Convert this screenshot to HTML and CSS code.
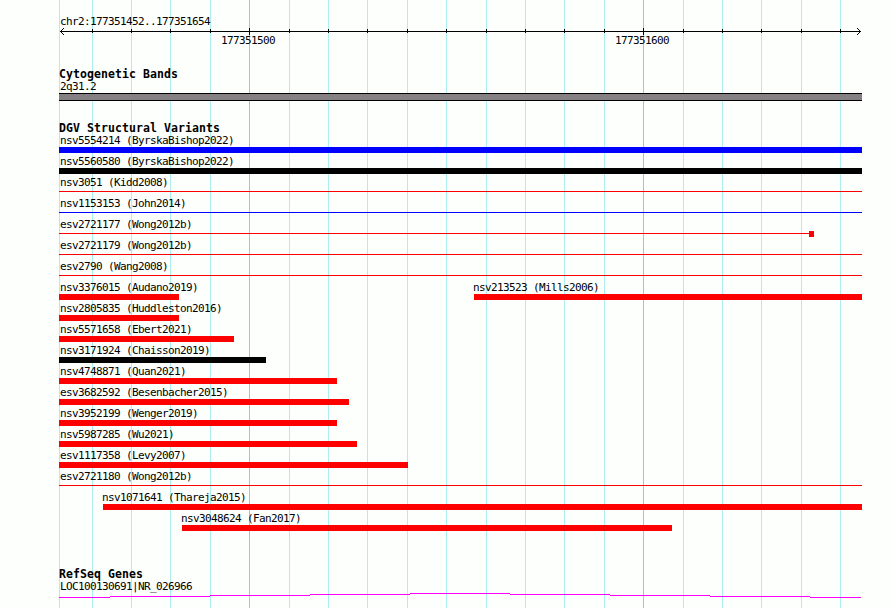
FILE: index.html
```
<!DOCTYPE html>
<html lang="en">
<head>
  <meta charset="UTF-8">
  <title>chr2:177351452..177351654</title>
  <link rel="stylesheet" href="styles.css">
</head>
<body>
  <!-- grid lines -->
  <svg class="grid" width="890" height="608">
    <path class="minor" d="M59.5 0V608M92.5 0V608M131.5 0V608M170.5 0V608M210.5 0V608M289.5 0V608M328.5 0V608M367.5 0V608M407.5 0V608M446.5 0V608M486.5 0V608M525.5 0V608M564.5 0V608M604.5 0V608M683.5 0V608M722.5 0V608M761.5 0V608M801.5 0V608M840.5 0V608"/>
    <path class="major" d="M249.5 0V608M643.5 0V608"/>
  </svg>

  <div class="panel">
    <!-- ruler -->
    <div class="ruler">
      <div class="label">chr2:177351452..177351654</div>
      <svg class="scale" width="803" height="7" viewBox="59 28 803 7">
        <path d="M60 31.5H861M92.5 29V33M131.5 29V33M170.5 29V33M210.5 29V33M249.5 28V35M289.5 29V33M328.5 29V33M367.5 29V33M407.5 29V33M446.5 29V33M486.5 29V33M525.5 29V33M564.5 29V33M604.5 29V33M643.5 28V35M683.5 29V33M722.5 29V33M761.5 29V33M801.5 29V33M840.5 29V33"/>
        <path d="M63 28.5h1M62 29.5h1M61 30.5h1M61 32.5h1M62 33.5h1M63 34.5h1M857 28.5h1M858 29.5h1M859 30.5h1M859 32.5h1M858 33.5h1M857 34.5h1"/>
      </svg>
      <div class="numbers">
        <span>177351500</span>
        <span>177351600</span>
      </div>
    </div>

    <!-- cytobands -->
    <div class="track cyto">
      <h2>Cytogenetic Bands</h2>
      <div class="label">2q31.2</div>
      <div class="band"></div>
    </div>

    <!-- variants -->
    <div class="track variants">
      <h2>DGV Structural Variants</h2>
      <div class="row"><div class="feature gain" style="width:803px"><div class="label">nsv5554214 (ByrskaBishop2022)</div><div class="bar"></div></div></div>
      <div class="row"><div class="feature complex" style="width:803px"><div class="label">nsv5560580 (ByrskaBishop2022)</div><div class="bar"></div></div></div>
      <div class="row"><div class="feature loss" style="width:803px"><div class="label">nsv3051 (Kidd2008)</div><div class="line"></div></div></div>
      <div class="row"><div class="feature gain" style="width:803px"><div class="label">nsv1153153 (John2014)</div><div class="line"></div></div></div>
      <div class="row"><div class="feature loss" style="width:755px"><div class="label">esv2721177 (Wong2012b)</div><div class="line"><i class="end"></i></div></div></div>
      <div class="row"><div class="feature loss" style="width:803px"><div class="label">esv2721179 (Wong2012b)</div><div class="line"></div></div></div>
      <div class="row"><div class="feature loss" style="width:803px"><div class="label">esv2790 (Wang2008)</div><div class="line"></div></div></div>
      <div class="row">
        <div class="feature loss" style="width:120px"><div class="label">nsv3376015 (Audano2019)</div><div class="bar"></div></div>
        <div class="feature loss inner" style="margin-left:295px;width:388px"><div class="label">nsv213523 (Mills2006)</div><div class="bar"></div></div>
      </div>
      <div class="row"><div class="feature loss" style="width:120px"><div class="label">nsv2805835 (Huddleston2016)</div><div class="bar"></div></div></div>
      <div class="row"><div class="feature loss" style="width:175px"><div class="label">nsv5571658 (Ebert2021)</div><div class="bar"></div></div></div>
      <div class="row"><div class="feature complex" style="width:207px"><div class="label">nsv3171924 (Chaisson2019)</div><div class="bar"></div></div></div>
      <div class="row"><div class="feature loss" style="width:278px"><div class="label">nsv4748871 (Quan2021)</div><div class="bar"></div></div></div>
      <div class="row"><div class="feature loss" style="width:290px"><div class="label">esv3682592 (Besenbacher2015)</div><div class="bar"></div></div></div>
      <div class="row"><div class="feature loss" style="width:278px"><div class="label">nsv3952199 (Wenger2019)</div><div class="bar"></div></div></div>
      <div class="row"><div class="feature loss" style="width:298px"><div class="label">nsv5987285 (Wu2021)</div><div class="bar"></div></div></div>
      <div class="row"><div class="feature loss" style="width:349px"><div class="label">esv1117358 (Levy2007)</div><div class="bar"></div></div></div>
      <div class="row"><div class="feature loss" style="width:803px"><div class="label">esv2721180 (Wong2012b)</div><div class="line"></div></div></div>
      <div class="row"><div class="feature loss inner" style="margin-left:44px;width:759px"><div class="label">nsv1071641 (Thareja2015)</div><div class="bar"></div></div></div>
      <div class="row"><div class="feature loss inner" style="margin-left:123px;width:490px"><div class="label">nsv3048624 (Fan2017)</div><div class="bar"></div></div></div>
    </div>

    <!-- genes -->
    <div class="track genes">
      <h2>RefSeq Genes</h2>
      <div class="label">LOC100130691|NR_026966</div>
      <svg class="intron" width="803" height="5" viewBox="59 593 803 5">
        <path d="M59 597.5H110M110 596.5H210M210 595.5H310M310 594.5H410M410 593.5H510M510 594.5H610M610 595.5H710M710 596.5H810M810 597.5H861"/>
      </svg>
    </div>
  </div>
</body>
</html>
```
FILE: styles.css
```
* {
  margin: 0;
  padding: 0;
  box-sizing: border-box;
}

body {
  width: 890px;
  height: 608px;
  overflow: hidden;
  background: #fdfffc;
  color: #000;
  font-family: "DejaVu Sans Mono", monospace;
  font-size: 11px;
  line-height: 13px;
  letter-spacing: -0.622px;
}

svg {
  display: block;
  fill: none;
  shape-rendering: crispEdges;
}

/* grid lines */
.grid {
  position: absolute;
  top: 0;
  left: 0;
}

.minor {
  stroke: #afeeee;
}

.major {
  stroke: #87ceeb;
}

.panel {
  position: relative;
  width: 803px;
  margin-left: 59px;
  padding-top: 15px;
}

h2 {
  height: 13px;
  font-size: 11.5px;
  font-weight: bold;
  line-height: 15px;
  letter-spacing: 0.077px;
  white-space: nowrap;
}

.label {
  height: 13px;
  padding-left: 1px;
  white-space: nowrap;
}

/* ruler */
.ruler {
  height: 52px;
}

.scale {
  stroke: #000;
}

.numbers {
  display: flex;
  gap: 340px;
  margin-top: -1px;
  padding-left: 162px;
}

.numbers span {
  width: 54px;
}

/* tracks */
.cyto {
  height: 54px;
}

.band {
  height: 8px;
  background: #848084;
  border-top: 1px solid #000;
  border-bottom: 1px solid #000;
}

.variants {
  height: 446px;
}

.row {
  display: flex;
  height: 21px;
}

.inner .label {
  margin-left: -2px;
}

.bar {
  height: 6px;
  background: currentColor;
}

.line {
  display: flex;
  height: 6px;
  align-items: flex-start;
}

.line::before {
  content: "";
  flex: 1;
  height: 1px;
  margin-top: 2px;
  background: currentColor;
}

.end {
  width: 5px;
  height: 6px;
  background: currentColor;
}

/* variant colors */
.feature .label {
  color: #000;
}

.gain {
  color: #00f;
}

.loss {
  color: #f00;
}

.complex {
  color: #000;
}

.intron {
  stroke: #f0f;
}
```
